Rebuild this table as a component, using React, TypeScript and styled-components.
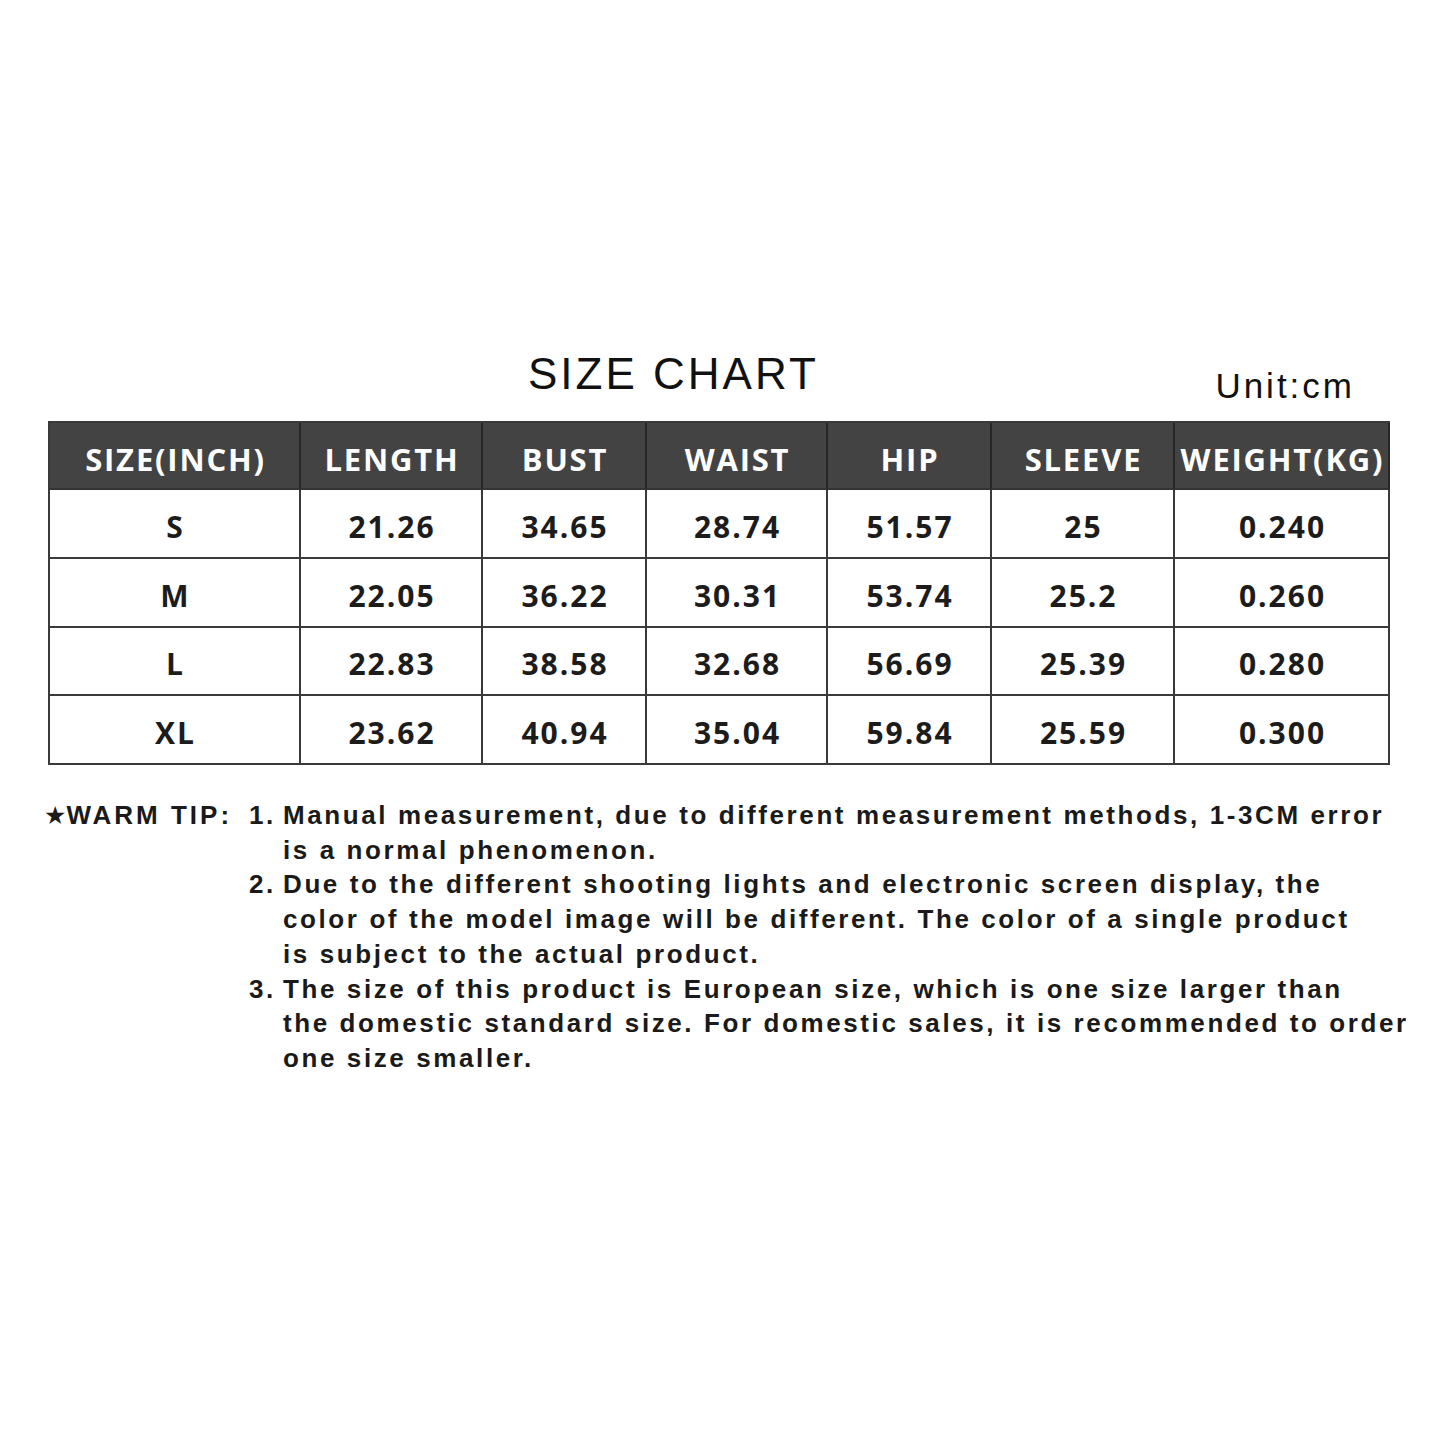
import styled, { createGlobalStyle } from 'styled-components'

const GlobalStyle = createGlobalStyle`
  html, body {
    margin: 0;
    padding: 0;
    background: #fff;
  }
  body {
    font-family: 'Liberation Sans', Arial, sans-serif;
  }
`

const Page = styled.main`
  width: 1445px;
  height: 1445px;
  padding-top: 352px;
  box-sizing: border-box;
  overflow: hidden;
  background: #fff;
`

const TitleBar = styled.header`
  display: flex;
  align-items: flex-start;
  justify-content: space-between;
  margin: 0 90px 0 528px;
`
const Title = styled.h1`
  margin: 0;
  font: 400 44px/44px 'Liberation Sans', Arial, sans-serif;
  letter-spacing: 3px;
  color: #111;
`
const Unit = styled.span`
  margin-top: 16px;
  font: 400 35px/35px 'Liberation Sans', Arial, sans-serif;
  letter-spacing: 3px;
  color: #111;
`

const columns = [251, 182, 164, 181, 164, 183, 215]

const ChartGrid = styled.div`
  display: grid;
  grid-template-columns: ${columns.map((c) => c + 'px').join(' ')};
  grid-template-rows: 67px repeat(4, 68.75px);
  width: max-content;
  margin: 18px 0 0 48px;
  border-left: 2px solid #3a3a3a;
  border-top: 2px solid #3a3a3a;
`
const Cell = styled.div<{ $head?: boolean }>`
  display: flex;
  align-items: center;
  justify-content: center;
  box-sizing: border-box;
  padding: 7px 0 0 2px;
  border-right: 2px solid ${({ $head }) => ($head ? '#262626' : '#3a3a3a')};
  border-bottom: 2px solid ${({ $head }) => ($head ? '#333' : '#3a3a3a')};
  background: ${({ $head }) => ($head ? '#434343' : '#fff')};
  color: ${({ $head }) => ($head ? '#fff' : '#1c1c1c')};
  font: 700 ${({ $head }) => ($head ? '31px' : '30px')}/1 'Open Sans', 'Liberation Sans', sans-serif;
  letter-spacing: ${({ $head }) => ($head ? '1.8px' : '2px')};
  white-space: nowrap;
`

const Tips = styled.section`
  display: grid;
  grid-template-columns: 205px auto;
  margin: 33px 0 0 44px;
  font: 700 26px/34.7px 'Liberation Sans', Arial, sans-serif;
  letter-spacing: 2.6px;
  color: #1a1a1a;
`
const Label = styled.div`
  white-space: nowrap;
  letter-spacing: 3px;
`
const Star = styled.span`
  font-family: 'DejaVu Sans', sans-serif;
  font-size: 25px;
  letter-spacing: 0;
`
const TipList = styled.ol`
  list-style: none;
  margin: 0;
  padding: 0;
`
const TipItem = styled.li`
  display: grid;
  grid-template-columns: 34px auto;
`
const Line = styled.span`
  display: block;
  white-space: nowrap;
`

const headers = ['SIZE(INCH)', 'LENGTH', 'BUST', 'WAIST', 'HIP', 'SLEEVE', 'WEIGHT(KG)']

const rows = [
  ['S', '21.26', '34.65', '28.74', '51.57', '25', '0.240'],
  ['M', '22.05', '36.22', '30.31', '53.74', '25.2', '0.260'],
  ['L', '22.83', '38.58', '32.68', '56.69', '25.39', '0.280'],
  ['XL', '23.62', '40.94', '35.04', '59.84', '25.59', '0.300'],
]

const tips = [
  [
    'Manual measurement, due to different measurement methods, 1-3CM error',
    'is a normal phenomenon.',
  ],
  [
    'Due to the different shooting lights and electronic screen display, the',
    'color of the model image will be different. The color of a single product',
    'is subject to the actual product.',
  ],
  [
    'The size of this product is European size, which is one size larger than',
    'the domestic standard size. For domestic sales, it is recommended to order',
    'one size smaller.',
  ],
]

function App() {
  return (
    <>
      <GlobalStyle />
      <Page>
        <TitleBar>
          <Title>SIZE CHART</Title>
          <Unit>Unit:cm</Unit>
        </TitleBar>
        <ChartGrid>
          {headers.map((h) => (
            <Cell $head key={h}>
              {h}
            </Cell>
          ))}
          {rows.map((row) =>
            row.map((value, i) => <Cell key={row[0] + i}>{value}</Cell>)
          )}
        </ChartGrid>
        <Tips>
          <Label>
            <Star>★</Star>WARM TIP:
          </Label>
          <TipList>
            {tips.map((lines, index) => (
              <TipItem key={index}>
                <span>{index + 1}.</span>
                <div>
                  {lines.map((line) => (
                    <Line key={line}>{line}</Line>
                  ))}
                </div>
              </TipItem>
            ))}
          </TipList>
        </Tips>
      </Page>
    </>
  )
}

export default App
